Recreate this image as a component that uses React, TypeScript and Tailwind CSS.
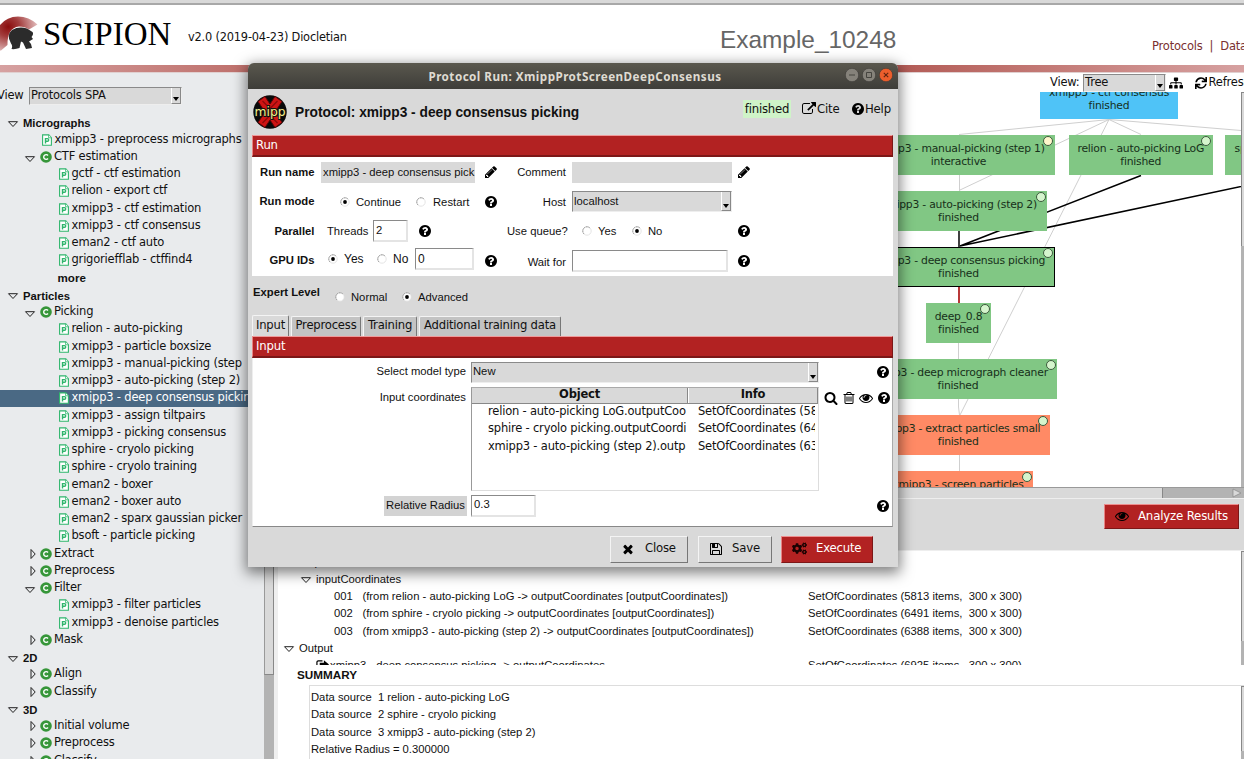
import React from "react";
import { FaCogs, FaSitemap, FaSync } from "react-icons/fa";

const DEJA = "font-['DejaVu_Sans',sans-serif] tracking-[-0.2px]";

const paths = {
  external:
    "M1408 928v320q0 119-84.5 203.5t-203.5 84.5h-832q-119 0-203.5-84.5t-84.5-203.5v-832q0-119 84.5-203.5t203.5-84.5h704q14 0 23 9t9 23v64q0 14-9 23t-23 9h-704q-66 0-113 47t-47 113v832q0 66 47 113t113 47h832q66 0 113-47t47-113v-320q0-14 9-23t23-9h64q14 0 23 9t9 23zm384-864v512q0 26-19 45t-45 19-45-19l-176-176-652 652q-10 10-23 10t-23-10l-114-114q-10-10-10-23t10-23l652-652-176-176q-19-19-19-45t19-45 45-19h512q26 0 45 19t19 45z",
  save: "M512 1536h768v-384h-768v384zm896 0h128v-896q0-14-10-38.5t-20-34.5l-281-281q-10-10-34-20t-39-10v416q0 40-28 68t-68 28h-576q-40 0-68-28t-28-68v-416h-128v1280h128v-416q0-40 28-68t68-28h832q40 0 68 28t28 68v416zm-384-928v-320q0-13-9.5-22.5t-22.5-9.5h-192q-13 0-22.5 9.5t-9.5 22.5v320q0 13 9.5 22.5t22.5 9.5h192q13 0 22.5-9.5t9.5-22.5zm640 32v928q0 40-28 68t-68 28h-1344q-40 0-68-28t-28-68v-1344q0-40 28-68t68-28h928q40 0 88 20t76 48l280 280q28 28 48 76t20 88z",
  eye: "M1664 960q-152-236-381-353 61 104 61 225 0 185-131.5 316.5t-316.5 131.5-316.5-131.5-131.5-316.5q0-121 61-225-229 117-381 353 133 205 333.5 326.5t434.5 121.5 434.5-121.5 333.5-326.5zm-720-384q0-20-14-34t-34-14q-125 0-214.5 89.5t-89.5 214.5q0 20 14 34t34 14 34-14 14-34q0-86 61-147t147-61q20 0 34-14t14-34zm848 384q0 34-20 69-140 230-376.5 368.5t-499.5 138.5-499.5-139-376.5-368q-20-35-20-69t20-69q140-229 376.5-368t499.5-139 499.5 139 376.5 368q20 35 20 69z",
  help: "M1024 1376v-192q0-14-9-23t-23-9h-192q-14 0-23 9t-9 23v192q0 14 9 23t23 9h192q14 0 23-9t9-23zm256-672q0-88-55.5-163t-138.5-116-170-41q-243 0-371 213-15 24 8 42l132 100q7 6 19 6 16 0 25-12 53-68 86-92 34-24 86-24 48 0 85.5 26t37.5 59q0 38-20 61t-68 45q-63 28-115.5 86.5t-52.5 125.5v36q0 14 9 23t23 9h192q14 0 23-9t9-23q0-19 21.5-49.5t54.5-49.5q32-18 49-28.5t46-35 44.5-48 28-60.5 12.5-81zm384 192q0 209-103 385.5t-279.5 279.5-385.5 103-385.5-103-279.5-279.5-103-385.5 103-385.5 279.5-279.5 385.5-103 385.5 103 279.5 279.5 103 385.5z",
  trash:
    "M704 736v576q0 14-9 23t-23 9h-64q-14 0-23-9t-9-23v-576q0-14 9-23t23-9h64q14 0 23 9t9 23zm256 0v576q0 14-9 23t-23 9h-64q-14 0-23-9t-9-23v-576q0-14 9-23t23-9h64q14 0 23 9t9 23zm256 0v576q0 14-9 23t-23 9h-64q-14 0-23-9t-9-23v-576q0-14 9-23t23-9h64q14 0 23 9t9 23zm128 724v-948h-896v948q0 22 7 40.5t14.5 27 10.5 8.5h832q3 0 10.5-8.5t14.5-27 7-40.5zm-672-1076h448l-48-117q-7-9-17-11h-317q-10 2-17 11zm928 32v64q0 14-9 23t-23 9h-96v948q0 83-47 143.5t-113 60.5h-832q-66 0-113-58.5t-47-141.5v-952h-96q-14 0-23-9t-9-23v-64q0-14 9-23t23-9h309l70-167q15-37 54-63t79-26h320q40 0 79 26t54 63l70 167h309q14 0 23 9t9 23z",
  search:
    "M1216 832q0-185-131.5-316.5t-316.5-131.5-316.5 131.5-131.5 316.5 131.5 316.5 316.5 131.5 316.5-131.5 131.5-316.5zm512 832q0 52-38 90t-90 38q-54 0-90-38l-343-342q-179 124-399 124-143 0-273.5-55.5t-225-150-150-225-55.5-273.5 55.5-273.5 150-225 225-150 273.5-55.5 273.5 55.5 225 150 150 225 55.5 273.5q0 220-124 399l343 343q37 37 37 90z",
  times:
    "M1490 1322q0 40-28 68l-136 136q-28 28-68 28t-68-28l-294-294-294 294q-28 28-68 28t-68-28l-136-136q-28-28-28-68t28-68l294-294-294-294q-28-28-28-68t28-68l136-136q28-28 68-28t68 28l294 294 294-294q28-28 68-28t68 28l136 136q28 28 28 68t-28 68l-294 294 294 294q28 28 28 68z",
  pencil:
    "M491 1536l91-91-235-235-91 91v107h128v128h107zm523-928q0-22-22-22-10 0-17 7l-542 542q-7 7-7 17 0 22 22 22 10 0 17-7l542-542q7-7 7-17zm-54-192l416 416-832 832h-416v-416zm683 96q0 53-37 90l-166 166-416-416 166-165q36-38 90-38 53 0 91 38l235 234q37 39 37 91z",
};

function Icon({ name, className = "size-[14px]" }: { name: keyof typeof paths; className?: string }) {
  return (
    <svg viewBox="0 0 1792 1792" className={`shrink-0 fill-black ${className}`}>
      <path d={paths[name]} />
    </svg>
  );
}

function Arrow({ open }: { open: boolean }) {
  return (
    <svg viewBox="0 0 12 12" className="size-3 shrink-0 fill-none stroke-[#222]">
      {open ? <path d="M1.5 3.7h9l-4.5 4.8z" /> : <path d="M4 1.5v9l4.2-4.5z" />}
    </svg>
  );
}

function PageIcon() {
  return (
    <svg viewBox="0 0 10 12" className="h-3 w-[10px] shrink-0 fill-white stroke-[#2fb56c]">
      <path d="M.6.9h6.2l2.6 2.7v7.6H.6z" strokeWidth="1.1" />
      <path d="M6.6.9v2.9h2.8" strokeWidth=".8" />
      <path d="M3.5 9.6V4.6h1.9q1.3 0 1.3 1.3t-1.3 1.4H3.5" strokeWidth="1.4" />
    </svg>
  );
}

function CatIcon() {
  return (
    <svg viewBox="0 0 12 12" className="size-3 shrink-0">
      <circle cx="6" cy="6" r="5.8" fill="#369639" />
      <path d="M8 4.5A2.4 2.4 0 1 0 8 7.5" fill="none" stroke="#fff" strokeWidth="1.4" />
    </svg>
  );
}

type Item = [kind: "h" | "p" | "o" | "c" | "l" | "more", label: string];
const tree: Item[] = [
  ["h", "Micrographs"],
  ["l", "xmipp3 - preprocess micrographs"],
  ["o", "CTF estimation"],
  ["p", "gctf - ctf estimation"],
  ["p", "relion - export ctf"],
  ["p", "xmipp3 - ctf estimation"],
  ["p", "xmipp3 - ctf consensus"],
  ["p", "eman2 - ctf auto"],
  ["p", "grigoriefflab - ctffind4"],
  ["more", "more"],
  ["h", "Particles"],
  ["o", "Picking"],
  ["p", "relion - auto-picking"],
  ["p", "xmipp3 - particle boxsize"],
  ["p", "xmipp3 - manual-picking (step"],
  ["p", "xmipp3 - auto-picking (step 2)"],
  ["p", "xmipp3 - deep consensus picking"],
  ["p", "xmipp3 - assign tiltpairs"],
  ["p", "xmipp3 - picking consensus"],
  ["p", "sphire - cryolo picking"],
  ["p", "sphire - cryolo training"],
  ["p", "eman2 - boxer"],
  ["p", "eman2 - boxer auto"],
  ["p", "eman2 - sparx gaussian picker"],
  ["p", "bsoft - particle picking"],
  ["c", "Extract"],
  ["c", "Preprocess"],
  ["o", "Filter"],
  ["p", "xmipp3 - filter particles"],
  ["p", "xmipp3 - denoise particles"],
  ["c", "Mask"],
  ["h", "2D"],
  ["c", "Align"],
  ["c", "Classify"],
  ["h", "3D"],
  ["c", "Initial volume"],
  ["c", "Preprocess"],
  ["c", "Classify"],
];

function TreeRow({ kind, label, selected }: { kind: Item[0]; label: string; selected: boolean }) {
  const base = "flex h-[17.25px] shrink-0 items-center whitespace-nowrap ";
  if (kind === "h")
    return (
      <div className={base + "pl-[7px] pt-[3px] text-[11.25px] font-bold"}>
        <Arrow open />
        <span className="ml-1">{label}</span>
      </div>
    );
  if (kind === "more") return <div className={base + "pl-[57.5px] pt-px text-[11.6px] font-bold"}>{label}</div>;
  if (kind === "o" || kind === "c")
    return (
      <div className={base + "pl-[40px] text-[11.5px] " + DEJA}>
        <span className={kind === "o" ? "-ml-4 mr-1 mt-1" : "-ml-[13px] mr-px"}>
          <Arrow open={kind === "o"} />
        </span>
        <CatIcon />
        <span className="ml-[2px]">{label}</span>
      </div>
    );
  return (
    <div
      className={
        base + DEJA + " text-[11.5px] " + (kind === "l" ? "pl-[42px]" : "pl-[59px]") + (selected ? " bg-[#4a6984] text-white" : "")
      }
    >
      <PageIcon />
      <span className="ml-[2.5px]">{label}</span>
    </div>
  );
}

function DropButton() {
  return (
    <span className="flex h-full w-[10px] shrink-0 items-end justify-center border-b border-l border-r border-b-[#888] border-l-white border-r-[#888] bg-[#d9d9d9] pb-[2px]">
      <svg viewBox="0 0 6 4" className="h-1 w-[6px]">
        <path d="M0 0h6L3 4z" />
      </svg>
    </span>
  );
}

function Combo({ text, className }: { text: string; className: string }) {
  return (
    <div
      className={
        "flex shrink-0 items-center justify-between border border-b-[#eee] border-l-[#8a8a8a] border-r-[#eee] border-t-[#8a8a8a] bg-[#d9d9d9] pl-px " +
        className
      }
    >
      <span className="whitespace-nowrap">{text}</span>
      <DropButton />
    </div>
  );
}

function Radio({ on = false }: { on?: boolean }) {
  return (
    <svg viewBox="0 0 10 10" className="size-[10px] shrink-0">
      <circle cx="5" cy="5" r="4.2" fill="#fff" stroke="#dedede" strokeWidth=".8" />
      <path d="M2 8A4.2 4.2 0 0 1 8 2" fill="none" stroke="#8e8e8e" strokeWidth=".9" strokeDasharray="1.6 .6" />
      {on && <circle cx="5" cy="5" r="1.9" fill="#000" />}
    </svg>
  );
}

function Entry({ text = "", className }: { text?: string; className: string }) {
  return (
    <div
      className={
        "flex shrink-0 items-center border border-b-2 border-r-2 border-b-[#e4e4e4] border-l-[#8a8a8a] border-r-[#e4e4e4] border-t-[#8a8a8a] bg-white pl-[2px] " +
        className
      }
    >
      {text}
    </div>
  );
}

function RedBar({ text }: { text: string }) {
  return (
    <div
      className={
        "flex h-[21.5px] shrink-0 items-center border border-b-2 border-b-[#7c1717] border-l-[#e88484] border-r-[#7c1717] border-t-[#f09a9a] bg-[#b22222] pb-px pl-[3px] text-[11.7px] text-white " +
        DEJA
      }
    >
      {text}
    </div>
  );
}

function RunRow({ children, className = "" }: { children: React.ReactNode; className?: string }) {
  return (
    <div className={"grid h-[29.5px] grid-cols-[63px_160px_32px_59px_166px_24px] items-center whitespace-nowrap " + className}>
      {children}
    </div>
  );
}

const Label = ({ children }: { children: React.ReactNode }) => <div className="pr-[0.5px] text-right font-bold">{children}</div>;

function Tab({ text, active = false, className }: { text: string; active?: boolean; className: string }) {
  return (
    <div
      className={
        "flex items-center justify-center rounded-t-[2px] border border-b-0 border-l-[#f4f4f4] border-r-[#777] border-t-[#f4f4f4] pb-px whitespace-nowrap " +
        (active ? "h-[21px] bg-[#d9d9d9] " : "h-5 bg-[#c3c3c3] ") +
        className
      }
    >
      {text}
    </div>
  );
}

function Dialog() {
  return (
    <div className="absolute left-[248px] top-[63px] flex h-[504px] w-[650px] flex-col rounded-t-[6px] bg-[#d9d9d9] text-[11.25px] shadow-[0_4px_14px_2px_rgba(0,0,0,0.5)]">
      <div className="relative flex h-[26px] shrink-0 items-center justify-center rounded-t-[6px] bg-gradient-to-b from-[#5a584e] to-[#3e3d39] pl-[4px] font-['Noto_Sans',sans-serif] text-[11.7px] font-bold tracking-[0.45px] text-[#dfdbd2]">
        Protocol Run: XmippProtScreenDeepConsensus
        <div className="absolute right-[5px] top-[5px] flex gap-[3px]">
          <svg viewBox="0 0 14 14" className="size-[14px]">
            <circle cx="7" cy="7" r="6.7" fill="#85827a" stroke="#3a3935" strokeWidth=".6" />
            <path d="M4 7h6" stroke="#45443f" />
          </svg>
          <svg viewBox="0 0 14 14" className="size-[14px]">
            <circle cx="7" cy="7" r="6.7" fill="#85827a" stroke="#3a3935" strokeWidth=".6" />
            <path d="M4.5 4.5h5v5h-5z" fill="none" stroke="#45443f" />
          </svg>
          <svg viewBox="0 0 14 14" className="size-[14px]">
            <circle cx="7" cy="7" r="6.7" fill="#ec5e2c" stroke="#3a3935" strokeWidth=".6" />
            <path d="M4.8 4.8l4.4 4.4m0-4.4L4.8 9.2" stroke="#5e2410" strokeWidth="1.1" />
          </svg>
        </div>
      </div>
      <div className="flex h-[46px] shrink-0 pl-[5px]">
        <svg viewBox="0 0 34 34" className="mt-[6px] size-[34px] shrink-0">
          <circle cx="17" cy="17" r="16.7" fill="#090909" />
          <path
            d="M5 6.5 12 1.500 17 9l5-7.500 7 5L22 17l7 10.500-7 5L17 25l-5 7.500-7-5L12 17z"
            fill="#cf1414"
            stroke="#5c0505"
            strokeWidth="1"
          />
          <path d="M9.500 6 17 13.500 24.500 6M9.500 28 17 20.500 24.500 28" fill="none" stroke="#8d0b0b" strokeWidth="1.300" />
          <text
            x="17"
            y="20.500"
            textAnchor="middle"
            textLength="31"
            lengthAdjust="spacingAndGlyphs"
            strokeWidth="2"
            stroke="#111"
            className="fill-[#f6f08a] font-['DejaVu_Sans',sans-serif] text-[12.500px] [paint-order:stroke]"
          >
            mipp
          </text>
        </svg>
        <div className="ml-2 mt-4 h-4 whitespace-nowrap text-[13.750px] font-bold leading-4">
          Protocol: xmipp3 - deep consensus picking
        </div>
        <div className={"ml-auto mt-[11px] flex h-[18px] items-center pr-[6px] text-[11.700px] " + DEJA}>
          <span className="flex h-[18px] w-12 items-center justify-center bg-[#cff3c8]">finished</span>
          <Icon name="external" className="ml-[11px] size-[14px]" />
          <span className="ml-px w-[22px]">Cite</span>
          <Icon name="help" className="ml-[12px] size-[14px]" />
          <span className="w-[27px]">Help</span>
        </div>
      </div>
      <div className="ml-1 flex w-[641px] flex-col">
        <RedBar text="Run" />
        <div className="h-[119.5px] bg-white pt-px">
          <RunRow>
            <Label>Run name</Label>
            <div className="ml-[6px] flex h-[21px] w-[154px] items-center overflow-hidden bg-[#d9d9d9] pl-[2px] pt-px">
              xmipp3 - deep consensus pick
            </div>
            <div className="flex justify-center">
              <Icon name="pencil" />
            </div>
            <div className="pt-px text-right">Comment</div>
            <div className="ml-[6px] h-[21px] bg-[#d9d9d9]" />
            <div className="flex justify-center">
              <Icon name="pencil" />
            </div>
          </RunRow>
          <RunRow>
            <Label>Run mode</Label>
            <div className="flex items-center pl-[25px]">
              <Radio on />
              <span className="ml-[6px] w-[60px] pt-px">Continue</span>
              <Radio />
              <span className="ml-[7px] pt-px">Restart</span>
            </div>
            <div className="flex justify-center">
              <Icon name="help" />
            </div>
            <div className="pt-px text-right">Host</div>
            <Combo text="localhost" className="ml-[6px] h-[21px]" />
          </RunRow>
          <RunRow>
            <Label>Parallel</Label>
            <div className="flex items-center pl-3">
              <span className="w-[46px] pt-px">Threads</span>
              <Entry text="2" className="h-[22px] w-[35px]" />
              <Icon name="help" className="ml-[10px] size-[14px]" />
            </div>
            <div />
            <div className="pt-px text-right">Use queue?</div>
            <div className="flex items-center pl-4">
              <Radio />
              <span className="ml-[6px] w-[34px] pt-px">Yes</span>
              <Radio on />
              <span className="ml-[6px] pt-px">No</span>
            </div>
            <div className="flex justify-center">
              <Icon name="help" />
            </div>
          </RunRow>
          <RunRow>
            <Label>GPU IDs</Label>
            <div className="mt-[-3px] flex items-center pl-[13px] text-[12px]">
              <Radio on />
              <span className="ml-[6px] w-[33px]">Yes</span>
              <Radio />
              <span className="ml-[6px] w-[22px]">No</span>
              <Entry text="0" className="h-[22px] w-[59px]" />
            </div>
            <div className="flex justify-center">
              <Icon name="help" />
            </div>
            <div className="pt-[3px] text-right">Wait for</div>
            <Entry className="ml-[6px] h-[22px] w-[156px]" />
            <div className="flex justify-center">
              <Icon name="help" />
            </div>
          </RunRow>
        </div>
        <div className="flex h-[40px] shrink-0 items-start pl-px pt-[9.500px]">
          <span className="w-[82px] font-bold">Expert Level</span>
          <div className="mt-[4px] flex items-center">
            <Radio />
            <span className="ml-[6px] w-[51px] pt-px">Normal</span>
            <Radio on />
            <span className="ml-[6px] pt-px">Advanced</span>
          </div>
        </div>
        <div className={"flex h-5 items-end text-[11.600px] " + DEJA}>
          <Tab text="Input" active className="w-[37px]" />
          <Tab text="Preprocess" className="ml-[2px] w-[70px]" />
          <Tab text="Training" className="ml-[2px] w-[54px]" />
          <Tab text="Additional training data" className="ml-[2px] w-[142px]" />
        </div>
        <RedBar text="Input" />
        <div className="flex h-[169px] flex-col border-b border-l border-r border-b-[#888] border-l-[#eee] border-r-[#aaa] bg-white pt-1">
          <div className="flex h-[21px] items-center">
            <span className="w-[213px] text-right">Select model type</span>
            <Combo text="New" className="ml-[5px] h-[21px] w-[348px]" />
            <Icon name="help" className="ml-[57px] size-[14px]" />
          </div>
          <div className="mt-1 flex h-[105px] items-start">
            <span className="mt-[4px] w-[213px] text-right">Input coordinates</span>
            <div
              className={
                "ml-[5px] h-[104px] w-[348px] border border-b-[#ddd] border-l-[#999] border-r-[#ddd] border-t-[#aaa] text-[11.500px] " +
                DEJA
              }
            >
              <div className="flex h-[16px] border-b border-[#888] bg-[#d9d9d9] font-bold">
                <span className="flex w-[216px] items-center justify-center border-r border-[#888]">Object</span>
                <span className="flex flex-1 items-center justify-center border-l border-r border-l-white border-r-[#888]">Info</span>
              </div>
              {[
                ["relion - auto-picking LoG.outputCoo", "SetOfCoordinates (5813"],
                ["sphire - cryolo picking.outputCoordi", "SetOfCoordinates (6491"],
                ["xmipp3 - auto-picking (step 2).outp", "SetOfCoordinates (6388"],
              ].map((r) => (
                <div key={r[0]} className="flex h-[17.250px] items-center whitespace-nowrap">
                  <span className="ml-4 w-[200px] overflow-hidden">{r[0]}</span>
                  <span className="ml-[10px] w-[117px] overflow-hidden">{r[1]}</span>
                </div>
              ))}
            </div>
            <div className="ml-[5px] mt-[4px] flex gap-[3.500px]">
              <Icon name="search" />
              <Icon name="trash" />
              <Icon name="eye" />
              <Icon name="help" />
            </div>
          </div>
          <div className="mt-[3px] flex h-[22px] items-center">
            <span className="ml-[131px] flex h-5 w-[83px] items-center justify-center whitespace-nowrap bg-[#d3d3d3]">Relative Radius</span>
            <Entry text="0.3" className="ml-[4px] h-[22px] w-[65px]" />
            <Icon name="help" className="ml-[340px] size-[14px]" />
          </div>
        </div>
      </div>
      <div className={"mt-[9px] flex h-[27px] pl-[362px] text-[11.700px] " + DEJA}>
        <div className="flex w-[78px] items-center border border-b-[#777] border-l-[#f4f4f4] border-r-[#777] border-t-[#f4f4f4] pb-px pl-[10px]">
          <Icon name="times" />
          <span className="ml-[10px]">Close</span>
        </div>
        <div className="ml-[10px] flex w-[74px] items-center border border-b-[#777] border-l-[#f4f4f4] border-r-[#777] border-t-[#f4f4f4] pb-px pl-[10px]">
          <Icon name="save" />
          <span className="ml-[9px]">Save</span>
        </div>
        <div className="ml-[9px] flex w-[92px] items-center border border-b-[#7c1717] border-l-[#e88484] border-r-[#7c1717] border-t-[#ee8e8e] bg-[#b22222] pb-px pl-[10px] text-white">
          <FaCogs className="size-[15px] text-[#1a0202]" />
          <span className="ml-[9px]">Execute</span>
        </div>
      </div>
    </div>
  );
}

type Node = { x: number; y: number; w: number; t: string; s?: string; bg: string; dot?: [number, string]; sel?: boolean };
const G = "#81c784";
const O = "#ff8a65";
const L = "#d5f5cd";
const nodes: Node[] = [
  { x: 1040, y: 79, w: 138, t: "xmipp3 - ctf consensus", bg: "#4fc3f7" },
  { x: 862, y: 135, w: 193, t: "xmipp3 - manual-picking (step 1)", s: "interactive", bg: G, dot: [1048, "#fff6cc"] },
  { x: 1069, y: 135, w: 143.5, t: "relion - auto-picking LoG", bg: G, dot: [1206, L] },
  { x: 1225, y: 135, w: 133, t: "sphire - cryolo picking", bg: G },
  { x: 870, y: 191, w: 177, t: "xmipp3 - auto-picking (step 2)", bg: G, dot: [1040.5, L] },
  { x: 862, y: 247, w: 193, t: "xmipp3 - deep consensus picking", bg: G, dot: [1048, L], sel: true },
  { x: 926, y: 303, w: 65, t: "deep_0.8", bg: G, dot: [984.5, L] },
  { x: 859, y: 359, w: 198, t: "xmipp3 - deep micrograph cleaner", bg: G, dot: [1051, L] },
  { x: 867, y: 415, w: 182.5, t: "xmipp3 - extract particles small", bg: O, dot: [1043, L] },
  { x: 883, y: 471, w: 150, t: "xmipp3 - screen particles", bg: O, dot: [1027, L] },
];

function Graph() {
  return (
    <div
      className={
        "relative h-full flex-1 overflow-hidden bg-white font-['DejaVu_Sans',sans-serif] text-[10.800px] tracking-[-0.230px] text-[#17301a]"
      }
    >
      <svg viewBox="278 92 963 395" className="absolute left-0 top-0 h-[395px] w-[963px]">
        <g stroke="#cfcfcf" fill="none">
          <path d="M1109 119.500 959 134.500M1109 119.500 960 190M1109 119.500l32 15M1109 119.500l180 15M1109 119.500 960 415" />
          <path d="M959.500 175v16M958.500 343v16M958.500 399v8l1 8M959.500 455v16" />
        </g>
        <g stroke="#000" fill="none">
          <path d="M1141 175.500 960 246M1290 176 960 246" strokeWidth="1.500" />
          <path d="M959 231v16" strokeWidth="1.500" />
        </g>
        <path d="M959 287v16" stroke="#b22222" strokeWidth="1.800" />
      </svg>
      {nodes.map((n) => (
        <div
          key={n.t}
          className={
            "absolute flex h-10 flex-col items-center justify-center whitespace-nowrap leading-[13px] " +
            (n.sel ? "outline-[1.500px] outline-offset-[-1px] outline-black outline-solid" : "")
          }
          style={{ left: n.x - 278, top: n.y - 92, width: n.w, background: n.bg }}
        >
          <span>{n.t}</span>
          <span>{n.s ?? "finished"}</span>
          {n.dot && (
            <span
              className="absolute top-[1px] size-[10px] rounded-full border border-[#3c5a3c]"
              style={{ left: n.dot[0] - n.x - 5, background: n.dot[1] }}
            />
          )}
        </div>
      ))}
    </div>
  );
}

function SideScroll({ thumb }: { thumb: string }) {
  return (
    <div className="h-full w-[3px] shrink-0 bg-[#b3b3b3]">
      <div className={"w-full border-l border-t border-l-[#888] border-t-[#888] bg-[#d9d9d9] " + thumb} />
    </div>
  );
}

function Details() {
  const row = "flex h-[17.250px] shrink-0 items-center whitespace-nowrap";
  return (
    <div className="flex h-[114px] overflow-hidden">
      <div className="flex flex-1 flex-col pt-[2.800px]">
        <div className={row + " pl-[11px]"}>
          <Arrow open />
          <span className="ml-1">Input</span>
        </div>
        <div className={row + " pl-[22px]"}>
          <Arrow open />
          <span className="ml-1">inputCoordinates</span>
        </div>
        {[
          ["001", "(from relion - auto-picking LoG -> outputCoordinates [outputCoordinates])", "(5813 items,\u00a0 300 x 300)"],
          ["002", "(from sphire - cryolo picking -> outputCoordinates [outputCoordinates])", "(6491 items,\u00a0 300 x 300)"],
          ["003", "(from xmipp3 - auto-picking (step 2) -> outputCoordinates [outputCoordinates])", "(6388 items,\u00a0 300 x 300)"],
        ].map((r) => (
          <div key={r[0]} className={row + " pl-[56px]"}>
            <span className="w-[28.500px]">{r[0]}</span>
            <span className="w-[445.500px]">{r[1]}</span>
            <span>SetOfCoordinates {r[2]}</span>
          </div>
        ))}
        <div className={row + " pl-[5px]"}>
          <Arrow open />
          <span className="ml-1">Output</span>
        </div>
        <div className={row + " pl-[38px]"}>
          <svg viewBox="0 0 14 12" className="-mt-px h-3 w-[13px] shrink-0">
            <path d="M7 1.500H2.500A1.500 1.500 0 0 0 1 3v6.500A1.500 1.500 0 0 0 2.500 11h7" fill="none" stroke="#000" strokeWidth="1.300" />
            <path d="M8.500 1 14 5.500 8.500 10V7.500H4V3.500h4.500z" />
          </svg>
          <span className="ml-px w-[478px]">xmipp3 - deep consensus picking -&gt; outputCoordinates</span>
          <span>SetOfCoordinates (6925 items,&nbsp; 300 x 300)</span>
        </div>
      </div>
      <SideScroll thumb="h-[90px]" />
    </div>
  );
}

export default function App() {
  return (
    <div className="relative flex h-[759px] w-[1244px] flex-col overflow-hidden bg-white font-['Liberation_Sans',Arial,sans-serif] text-[11.250px] leading-[1.200] text-[#111]">
      <div className="h-[5px] shrink-0 border-b-2 border-[#a8a8a8] bg-[#d9d9d9]" />
      <header className="flex h-[60px] shrink-0">
        <svg viewBox="0 0 40 40" className="mt-[10px] size-10 shrink-0">
          <defs>
            <radialGradient id="crest" cx=".22" cy=".3" r=".85">
              <stop offset="0" stopColor="#8a0c0c" />
              <stop offset=".35" stopColor="#a23c3c" />
              <stop offset="1" stopColor="#ecd0d0" />
            </radialGradient>
          </defs>
          <path d="M0 35.500V10Q7 1.500 18 1.500T37.500 9.500L29 14.500Q25 11.500 19 11.500 7 13 7.500 30L1 35.500z" fill="url(#crest)" />
          <path
            d="M11.500 34Q13 31 11 28.500 6 20 12 15q7-4 15-1.500L32.500 17Q34 19 31.500 22L33 24l-4 2.500 2 2.500 1 4-6 1-3-6.500-2-1L19.500 33q-4 1.500-8 1z"
            fill="#2b2b2b"
          />
        </svg>
        <div className="ml-[3px] mt-[10px] w-[145px] shrink-0 font-['Liberation_Serif',serif] text-[33px] leading-[38px] text-black">SCIPION</div>
        <div className={"mt-[26px] w-[532px] shrink-0 text-[11.400px] " + DEJA}>v2.0 (2019-04-23) Diocletian</div>
        <div className="mt-[20px] w-[432px] shrink-0 text-[24.400px] text-[#666]">Example_10248</div>
        <div className={"mt-[34.500px] flex gap-[7px] whitespace-nowrap text-[11.500px] text-[#7a3030] " + DEJA}>
          <span>Protocols</span>
          <span>|</span>
          <span>Data</span>
        </div>
      </header>
      <div className="h-[8px] shrink-0 border-b border-[#e0d0d0] bg-gradient-to-r from-[#d6a1a1] via-[#931a1a] to-[#d6a1a1]" />
      <div className="flex min-h-0 flex-1">
        <aside className="flex w-[264px] shrink-0 flex-col overflow-hidden bg-[#e9ebed]">
          <div className={"mt-[14px] flex h-[18px] shrink-0 items-center text-[11.500px] " + DEJA}>
            <span className="-ml-[3px] w-8">View</span>
            <Combo text="Protocols SPA" className="h-[18px] w-[153px]" />
          </div>
          <div className="mt-[8.700px] flex flex-col">
            {tree.map(([k, t], i) => (
              <TreeRow key={i} kind={k} label={t} selected={i === 16} />
            ))}
          </div>
        </aside>
        <div className="w-[10px] shrink-0 bg-[#b3b3b3]">
          <div className="h-[602px] border border-b-[#888] border-l-[#999] border-r-[#888] border-t-white bg-[#d9d9d9]" />
        </div>
        <div className="w-1 shrink-0 bg-[#efefef]" />
        <main className="flex min-w-0 flex-1 flex-col">
          <div className={"flex h-[19px] shrink-0 items-center whitespace-nowrap pl-[772px] text-[11.500px] " + DEJA}>
            <span className="w-[33px] shrink-0">View:</span>
            <Combo text="Tree" className="h-[18px] w-[83px]" />
            <FaSitemap className="ml-[2.500px] size-[14px] shrink-0 text-black" />
            <FaSync className="ml-[12px] size-[12px] shrink-0 text-black" />
            <span className="ml-[2px]">Refresh</span>
          </div>
          <div className="flex h-[395px] shrink-0">
            <Graph />
            <SideScroll thumb="h-[154px]" />
          </div>
          <div className="flex h-[12px] shrink-0 border border-b-[#eee] border-r-0 border-t-[#999] bg-[#b3b3b3]">
            <div className="w-[884px] shrink-0 border-r border-[#888] bg-[#d9d9d9]" />
            <svg viewBox="0 0 10 10" className="ml-[69px] size-[10px] shrink-0">
              <path d="M1 1l8 4-8 4z" fill="#d9d9d9" stroke="#888" strokeWidth=".7" />
            </svg>
          </div>
          <div className="flex h-[52px] shrink-0 justify-end border-b border-[#eee] bg-[#d9d9d9] pr-[5px] pt-[5px]">
            <div
              className={
                "flex h-[25px] w-[135px] items-center border border-b-[#7c1717] border-l-[#e88484] border-r-[#7c1717] border-t-[#ee8e8e] bg-[#b22222] pb-px pl-[10px] text-[11.800px] text-white " +
                DEJA
              }
            >
              <Icon name="eye" />
              <span className="ml-[9px] whitespace-nowrap">Analyze Results</span>
            </div>
          </div>
          <Details />
          <div className="flex h-[20px] shrink-0 items-center pl-[19px] pt-px text-[11.700px] font-bold">SUMMARY</div>
          <div className="ml-[31px] flex flex-1 border-l border-t border-[#ddd]">
            <div className="flex flex-1 flex-col whitespace-pre pl-px pt-[3px] leading-[17.250px]">
              <span>Data source  1 relion - auto-picking LoG</span>
              <span>Data source  2 sphire - cryolo picking</span>
              <span>Data source  3 xmipp3 - auto-picking (step 2)</span>
              <span>Relative Radius = 0.300000</span>
            </div>
            <SideScroll thumb="h-[65px]" />
          </div>
        </main>
      </div>
      <Dialog />
    </div>
  );
}
